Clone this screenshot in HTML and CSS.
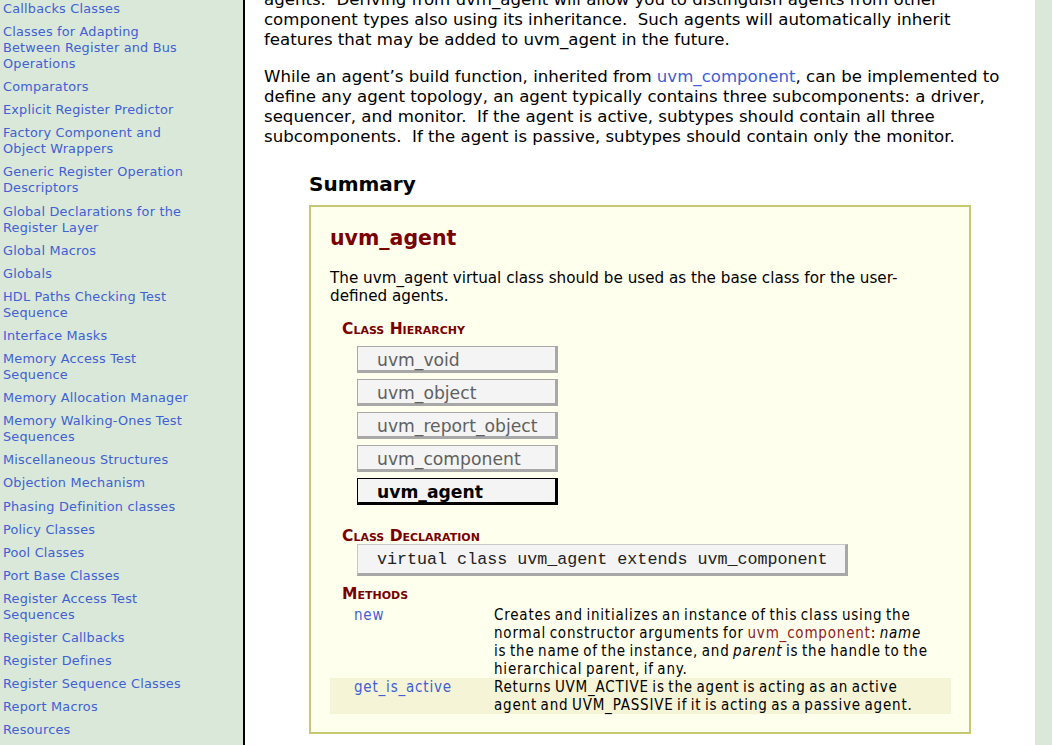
FILE: index.html
```html
<!DOCTYPE html>
<html>
<head>
<meta charset="utf-8">
<link rel="stylesheet" href="styles.css">
</head>
<body>
<div class="page">
  <nav class="menu">
    <a class="menu-item">Callbacks Classes</a>
    <a class="menu-item">Classes for Adapting Between Register and Bus Operations</a>
    <a class="menu-item">Comparators</a>
    <a class="menu-item">Explicit Register Predictor</a>
    <a class="menu-item">Factory Component and Object Wrappers</a>
    <a class="menu-item">Generic Register Operation Descriptors</a>
    <a class="menu-item">Global Declarations for the Register Layer</a>
    <a class="menu-item">Global Macros</a>
    <a class="menu-item">Globals</a>
    <a class="menu-item">HDL Paths Checking Test Sequence</a>
    <a class="menu-item">Interface Masks</a>
    <a class="menu-item">Memory Access Test Sequence</a>
    <a class="menu-item">Memory Allocation Manager</a>
    <a class="menu-item">Memory Walking-Ones Test Sequences</a>
    <a class="menu-item">Miscellaneous Structures</a>
    <a class="menu-item">Objection Mechanism</a>
    <a class="menu-item">Phasing Definition classes</a>
    <a class="menu-item">Policy Classes</a>
    <a class="menu-item">Pool Classes</a>
    <a class="menu-item">Port Base Classes</a>
    <a class="menu-item">Register Access Test Sequences</a>
    <a class="menu-item">Register Callbacks</a>
    <a class="menu-item">Register Defines</a>
    <a class="menu-item">Register Sequence Classes</a>
    <a class="menu-item">Report Macros</a>
    <a class="menu-item">Resources</a>
  </nav>
  <main class="content">
    <p class="para first">agents.&nbsp; Deriving from uvm_agent will allow you to distinguish agents from other component types also using its inheritance.&nbsp; Such agents will automatically inherit features that may be added to uvm_agent in the future.</p>
    <p class="para">While an agent’s build function, inherited from <a class="link">uvm_component</a>, can be implemented to define any agent topology, an agent typically contains three subcomponents: a driver, sequencer, and monitor.&nbsp; If the agent is active, subtypes should contain all three subcomponents.&nbsp; If the agent is passive, subtypes should contain only the monitor.</p>

    <section class="summary">
      <h2 class="summary-title">Summary</h2>
      <div class="summary-box">
        <h3 class="class-title">uvm_agent</h3>
        <p class="class-desc">The uvm_agent virtual class should be used as the base class for the user-defined agents.</p>

        <h4 class="cheading">Class Hierarchy</h4>
        <div class="hier">
          <div class="hier-box">uvm_void</div>
          <div class="hier-box">uvm_object</div>
          <div class="hier-box">uvm_report_object</div>
          <div class="hier-box">uvm_component</div>
          <div class="hier-box current">uvm_agent</div>
        </div>

        <h4 class="cheading decl-heading">Class Declaration</h4>
        <div class="decl"><code class="code">virtual class uvm_agent extends uvm_component</code></div>

        <h4 class="cheading methods-heading">Methods</h4>
        <div class="methods">
          <div class="mrow">
            <a class="mname">new</a>
            <div class="mdesc">Creates and initializes an instance of this class using the normal constructor arguments for <a class="vlink">uvm_component</a>: <i>name</i> is the name of the instance, and <i>parent</i> is the handle to the hierarchical parent, if any.</div>
          </div>
          <div class="mrow alt">
            <a class="mname">get_is_active</a>
            <div class="mdesc">Returns UVM_ACTIVE is the agent is acting as an active agent and UVM_PASSIVE if it is acting as a passive agent.</div>
          </div>
        </div>
      </div>
    </section>
  </main>
  <aside class="rail"></aside>
</div>
</body>
</html>
```

FILE: styles.css
```css
html, body {
  margin: 0;
  padding: 0;
  height: 100%;
  overflow: hidden;
  background: #d9e8d9;
}

.page {
  display: flex;
  height: 745px;
  font-family: "DejaVu Sans", Verdana, sans-serif;
  color: #000;
}

.menu {
  flex: none;
  width: 245px;
  box-sizing: border-box;
  background: #d9e8d9;
  border-right: 2px solid #000;
  display: flex;
  flex-direction: column;
  gap: 7.1px;
  padding: 1px 45px 0 3px;
  font-size: 12.85px;
  line-height: 16px;
}

.menu-item {
  color: #4160d4;
  text-decoration: none;
  letter-spacing: 0.2px;
}

.content {
  flex: 1;
  background: #fff;
  padding: 0 18px 0 19px;
  overflow: hidden;
}

.rail {
  width: 17px;
  flex: none;
  background: #d9e8d9;
}

.para {
  font-size: 16.6px;
  line-height: 20px;
  margin: 0 0 17px 0;
}

.para.first {
  margin-top: -10px;
}

.link {
  color: #4160d4;
  text-decoration: none;
}

.summary {
  margin: 25px 46px 0 45px;
}

.summary-title {
  font-size: 20px;
  line-height: 24px;
  font-weight: bold;
  margin: 0 0 9px 0;
}

.summary-box {
  background: #ffffee;
  border: 2px solid #c8c870;
  padding: 18px 18px 18px 19px;
}

.class-title {
  margin: 0;
  font-size: 20.5px;
  line-height: 26px;
  font-weight: bold;
  color: #7a0000;
}

.class-desc {
  margin: 18px 0 0 0;
  font-size: 15.2px;
  line-height: 18px;
}

.cheading {
  margin: 16px 0 0 12px;
  font-size: 15.5px;
  line-height: 16px;
  font-weight: bold;
  font-variant: small-caps;
  color: #7a0000;
}

.hier {
  margin: 9px 0 0 27px;
  display: flex;
  flex-direction: column;
  gap: 6px;
}

.hier-box {
  width: 178px;
  background: #f4f4f4;
  border-style: solid;
  border-color: #a8a8a8;
  border-width: 1px 3px 3px 1px;
  padding: 0 0 0 19px;
  height: 23px;
  line-height: 27px;
  font-size: 17.2px;
  color: #606060;
}

.hier-box.current {
  border-color: #000;
  color: #000;
  font-weight: bold;
}

.decl-heading {
  margin-top: 23px;
}

.decl {
  margin: 0 0 0 27px;
}

.code {
  display: inline-block;
  background: #f4f4f4;
  border-style: solid;
  border-color: #c8c8c8 #a8a8a8 #a8a8a8 #c8c8c8;
  border-width: 1px 3px 3px 1px;
  padding: 0 17px 0 19px;
  height: 28px;
  line-height: 30px;
  font-family: "Liberation Mono", "Courier New", monospace;
  font-size: 16.7px;
  color: #222;
}

.methods-heading {
  margin-top: 10px;
}

.methods {
  margin-top: 4px;
  font-family: "DejaVu Sans Condensed", "DejaVu Sans", sans-serif;
  font-stretch: condensed;
  font-size: 15px;
  letter-spacing: 0.8px;
  word-spacing: -1.5px;
  line-height: 18px;
}

.mrow {
  display: flex;
  padding-left: 24px;
}

.mrow.alt {
  background: #f6f4d6;
}

.mname {
  width: 140px;
  flex: none;
  color: #4160d4;
  text-decoration: none;
}

.mdesc {
  flex: 1;
  padding-right: 17px;
}

.vlink {
  color: #902020;
  text-decoration: none;
}
```
